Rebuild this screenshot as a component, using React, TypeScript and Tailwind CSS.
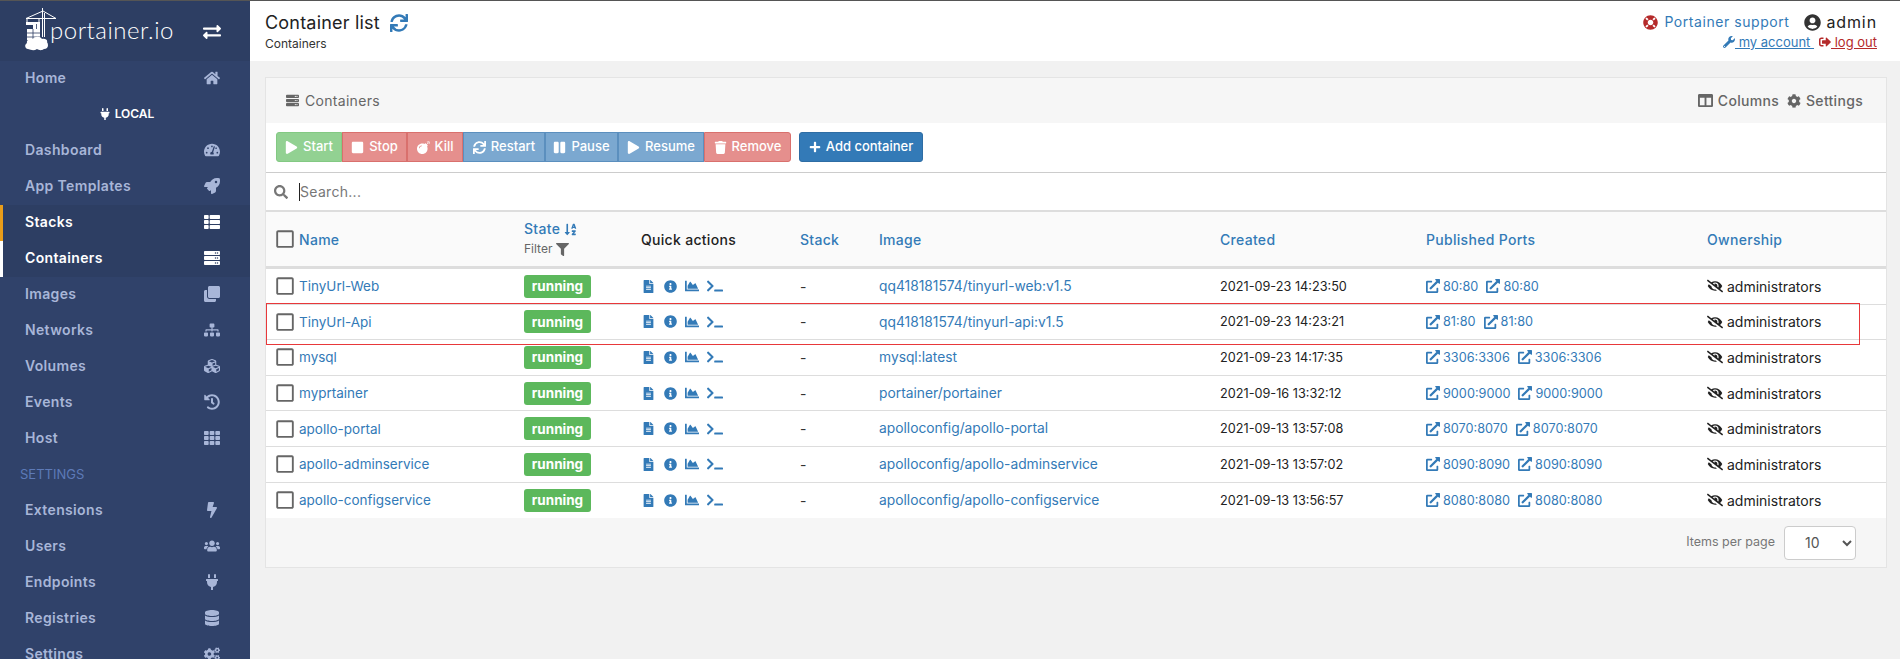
import React from "react";
import {
  FaExchangeAlt, FaHome, FaPlug, FaTachometerAlt, FaRocket, FaThList, FaServer, FaClone, FaSitemap, FaCubes, FaHistory, FaTh,
  FaBolt, FaUsers, FaDatabase, FaCogs, FaSync, FaLifeRing, FaUserCircle, FaWrench, FaSignOutAlt, FaColumns, FaCog, FaPlay,
  FaStop, FaBomb, FaPause, FaTrash, FaPlus, FaSearch, FaRegSquare, FaSortAlphaDown, FaFilter, FaFileAlt, FaInfoCircle,
  FaChartArea, FaTerminal, FaExternalLinkAlt, FaEyeSlash,
} from "react-icons/fa";

const font = "font-['Inter','Liberation_Sans',sans-serif]";

function Logo() {
  return (
    <svg width="32" height="44" viewBox="0 0 32 44" fill="none" className="shrink-0">
      <g stroke="#fff" strokeWidth="1">
        <path d="M17.5 1V30M19.5 6V30M1 11.5H31M1 11.5L18 4L31 11.5" />
        <path d="M2 11.5V16M14 11.5V16" />
      </g>
      <rect x="1" y="15" width="14" height="3" fill="#fff" />
      <rect x="2" y="22" width="13" height="11" fill="#fff" />
      <rect x="8" y="17" width="7" height="5" fill="#fff" />
      <path d="M2 26H15M2 30H15M8 22V33M11.5 17V22" stroke="#2d3e63" strokeWidth="0.8" />
      <path d="M3 42C0 42 -1 38 2 36C1 33 5 31 8 32C10 29 15 29 17 32C20 31 23 33 22 35C24 38 23 42 19 42C16 44 14 43 12 42C9 44 6 43 3 42Z" fill="#fff" />
    </svg>
  );
}

function NavRow({ label, Icon, active, bar }: { label: string; Icon: any; active?: boolean; bar?: string }) {
  return (
    <div className={`relative h-9 flex items-center justify-between pb-[3px] pl-[25px] pr-[29px] text-[14px] font-semibold tracking-[0.35px] ${active ? "bg-[#2d3e63] text-white" : "text-[#a8b6d8]"}`}>
      {bar && <span className={`absolute left-0 top-0 bottom-0 w-[3px] ${bar}`} />}
      <span>{label}</span>
      <span className="w-[18px] flex justify-center"><Icon size={16} /></span>
    </div>
  );
}

function Sidebar() {
  return (
    <aside className="w-[250px] shrink-0 bg-[#30426a]">
      <div className="h-[60px] bg-[#2d3e63] flex items-start pl-[25px] pr-[29px] pt-[6px] text-white">
        <Logo />
        <span className="ml-[-7px] mt-[8px] text-[24px] leading-[30px] font-light font-['Lato',sans-serif] tracking-[0.5px] text-white">portainer.io</span>
        <span className="ml-auto mt-[16px] w-[18px] flex justify-center"><FaExchangeAlt size={18} /></span>
      </div>
      <NavRow label="Home" Icon={FaHome} />
      <div className="h-9 flex items-center justify-center gap-1 text-[12px] font-semibold text-white pl-[3px] pb-[2px]"><FaPlug size={12} />LOCAL</div>
      <NavRow label="Dashboard" Icon={FaTachometerAlt} />
      <NavRow label="App Templates" Icon={FaRocket} />
      <NavRow label="Stacks" Icon={FaThList} active bar="bg-[#e99d1a]" />
      <NavRow label="Containers" Icon={FaServer} active bar="bg-white" />
      <NavRow label="Images" Icon={FaClone} />
      <NavRow label="Networks" Icon={FaSitemap} />
      <NavRow label="Volumes" Icon={FaCubes} />
      <NavRow label="Events" Icon={FaHistory} />
      <NavRow label="Host" Icon={FaTh} />
      <div className="h-9 flex items-center pl-5 text-[13px] text-[#5d7ab8]">SETTINGS</div>
      <NavRow label="Extensions" Icon={FaBolt} />
      <NavRow label="Users" Icon={FaUsers} />
      <NavRow label="Endpoints" Icon={FaPlug} />
      <NavRow label="Registries" Icon={FaDatabase} />
      <NavRow label="Settings" Icon={FaCogs} />
    </aside>
  );
}

function Header() {
  return (
    <header className="h-[60px] bg-white flex justify-between pl-[15px] pr-[23px]">
      <div>
        <div className="mt-[10px] flex items-center gap-[10px] text-[18px] leading-[24px] text-[#222] tracking-[0.2px]">
          Container list <FaSync size={18} className="text-[#337ab7]" />
        </div>
        <div className="mt-[1px] text-[12px] leading-[16px] text-[#333]">Containers</div>
      </div>
      <div className="flex flex-col items-end">
        <div className="mt-[10px] flex items-center text-[14px] leading-[22px]">
          <FaLifeRing size={15} className="text-[#b52a2a]" />
          <span className="ml-[6px] tracking-[0.55px] text-[#337ab7]">Portainer support</span>
          <FaUserCircle size={17} className="ml-[15px] text-[#333]" />
          <span className="ml-[5px] text-[16px] tracking-[0.9px] text-[#222]">admin</span>
        </div>
        <div className="mt-[1px] flex items-center text-[13px] leading-[16px]">
          <FaWrench size={12} className="text-[#337ab7]" />
          <span className="text-[#337ab7] underline whitespace-pre"> my account </span>
          <FaSignOutAlt size={12} className="ml-[5px] text-[#b52a2a]" />
          <span className="text-[#b52a2a] underline whitespace-pre"> log out</span>
        </div>
      </div>
    </header>
  );
}

const actions = [
  { label: "Start", Icon: FaPlay, w: "w-[66px]", cls: "bg-[#92d192] border-[#83c983] rounded-l-[3px]" },
  { label: "Stop", Icon: FaStop, w: "w-[65px]", cls: "bg-[#e58f8d] border-[#d9706d]" },
  { label: "Kill", Icon: FaBomb, w: "w-[56px]", cls: "bg-[#e58f8d] border-[#d9706d]" },
  { label: "Restart", Icon: FaSync, w: "w-[82px]", cls: "bg-[#7ba8d0] border-[#5b8fbe]" },
  { label: "Pause", Icon: FaPause, w: "w-[73px]", cls: "bg-[#7ba8d0] border-[#5b8fbe]" },
  { label: "Resume", Icon: FaPlay, w: "w-[86px]", cls: "bg-[#7ba8d0] border-[#5b8fbe]" },
  { label: "Remove", Icon: FaTrash, w: "w-[87px]", cls: "bg-[#e58f8d] border-[#d9706d] rounded-r-[3px]" },
];

const cols = "grid grid-cols-[24px_225px_117px_159px_79px_341px_206px_281px_1fr] items-center pl-[9px]";

const rows = [
  ["TinyUrl-Web", "qq418181574/tinyurl-web:v1.5", "2021-09-23 14:23:50", "80:80"],
  ["TinyUrl-Api", "qq418181574/tinyurl-api:v1.5", "2021-09-23 14:23:21", "81:80"],
  ["mysql", "mysql:latest", "2021-09-23 14:17:35", "3306:3306"],
  ["myprtainer", "portainer/portainer", "2021-09-16 13:32:12", "9000:9000"],
  ["apollo-portal", "apolloconfig/apollo-portal", "2021-09-13 13:57:08", "8070:8070"],
  ["apollo-adminservice", "apolloconfig/apollo-adminservice", "2021-09-13 13:57:02", "8090:8090"],
  ["apollo-configservice", "apolloconfig/apollo-configservice", "2021-09-13 13:56:57", "8080:8080"],
];

function Port({ value }: { value: string }) {
  return (
    <span className="inline-flex items-center gap-[3px] text-[#337ab7]"><FaExternalLinkAlt size={14} />{value}</span>
  );
}

function Panel() {
  return (
    <section className="relative mx-[15px] mt-4 mr-[13px] border border-[#e4e4e4] bg-[#f6f6f6]">
      <div className="h-[45px] flex items-center justify-between pl-[20px] pr-[23px] text-[14px] text-[#666] tracking-[0.3px]">
        <div className="flex items-center gap-[6px]"><FaServer size={13} /> Containers</div>
        <div className="flex items-center font-medium">
          <FaColumns size={15} /><span className="ml-[5px]">Columns</span>
          <FaCog size={14} className="ml-[8px]" /><span className="ml-[5px]">Settings</span>
        </div>
      </div>
      <div className="bg-white">
        <div className="h-[50px] flex items-start pt-[9px] pl-[10px] border-b border-[#ccc]">
          {actions.map(({ label, Icon, w, cls }) => (
            <div key={label} className={`${w} h-[30px] border flex items-center justify-center gap-[5px] text-[13px] font-medium text-white ${cls}`}>
              <Icon size={13} />{label}
            </div>
          ))}
          <div className="ml-2 w-[124px] h-[30px] rounded-[3px] border border-[#2e6da4] bg-[#337ab7] flex items-center justify-center gap-[5px] text-[13px] font-medium text-white">
            <FaPlus size={12} />Add container
          </div>
        </div>
        <div className="h-[39px] flex items-center pl-[8px] border-b-2 border-[#ddd] text-[14px] text-[#777] tracking-[0.3px]">
          <FaSearch size={14} className="text-[#777]" />
          <span className="ml-[11px] border-l border-[#222] leading-[18px]">Search...</span>
        </div>
        <div className={`${cols} h-[57px] bg-[#fafafa] border-b-[3px] border-[#ddd] text-[14px] font-medium tracking-[0.3px] text-[#337ab7]`}>
          <FaRegSquare size={20} className="text-[#666]" />
          <span>Name</span>
          <div>
            <div className="flex items-center gap-1 leading-[20px]">State <FaSortAlphaDown size={13} /></div>
            <div className="flex items-center gap-1 text-[12px] leading-[20px] font-normal text-[#666] tracking-normal">Filter <FaFilter size={13} /></div>
          </div>
          <span className="text-[#222]">Quick actions</span>
          <span>Stack</span>
          <span>Image</span>
          <span>Created</span>
          <span>Published Ports</span>
          <span>Ownership</span>
        </div>
        {rows.map(([name, image, created, port]) => (
          <div key={name} className={`${cols} h-[35.6px] border-b border-[#ddd] last:border-b-0 text-[14px] text-[#333]`}>
            <FaRegSquare size={20} className="text-[#666]" />
            <span className="text-[#337ab7] text-[13.5px]">{name}</span>
            <span className="w-[67px] h-[23px] rounded-[3px] bg-[#5cb85c] text-white font-bold text-[13.5px] flex items-center justify-center">running</span>
            <span className="flex items-center text-[#337ab7]">
              <FaFileAlt size={13} className="ml-[1px]" />
              <FaInfoCircle size={13} className="ml-[9px]" />
              <FaChartArea size={14} className="ml-[8px]" />
              <FaTerminal size={16} className="ml-[8px]" />
            </span>
            <span>-</span>
            <span className="text-[#337ab7] text-[13.8px]">{image}</span>
            <span className="text-[#222] text-[12.7px]">{created}</span>
            <span className="flex gap-[8px] text-[12.7px]"><Port value={port} /><Port value={port} /></span>
            <span className="flex items-center gap-[4px] text-[#222]"><FaEyeSlash size={16} /> administrators</span>
          </div>
        ))}
      </div>
      <div className="h-[49px] flex items-center justify-end pr-[30px] text-[12.5px] text-[#777]">
        Items per page
        <select defaultValue="10" className="ml-[9px] w-[72px] h-[34px] pl-[16px] rounded-[4px] border border-[#ccc] bg-white text-[14px] text-[#555]">
          <option>10</option>
        </select>
      </div>
      <div className="absolute left-0 top-[225px] w-[1594px] h-[42px] border border-[#e8383a] pointer-events-none" />
    </section>
  );
}

export default function App() {
  return (
    <div className={`h-[659px] overflow-hidden border-t border-[#555] flex bg-[#f1f1f1] ${font}`}>
      <Sidebar />
      <main className="flex-1 min-w-0">
        <Header />
        <Panel />
      </main>
    </div>
  );
}
